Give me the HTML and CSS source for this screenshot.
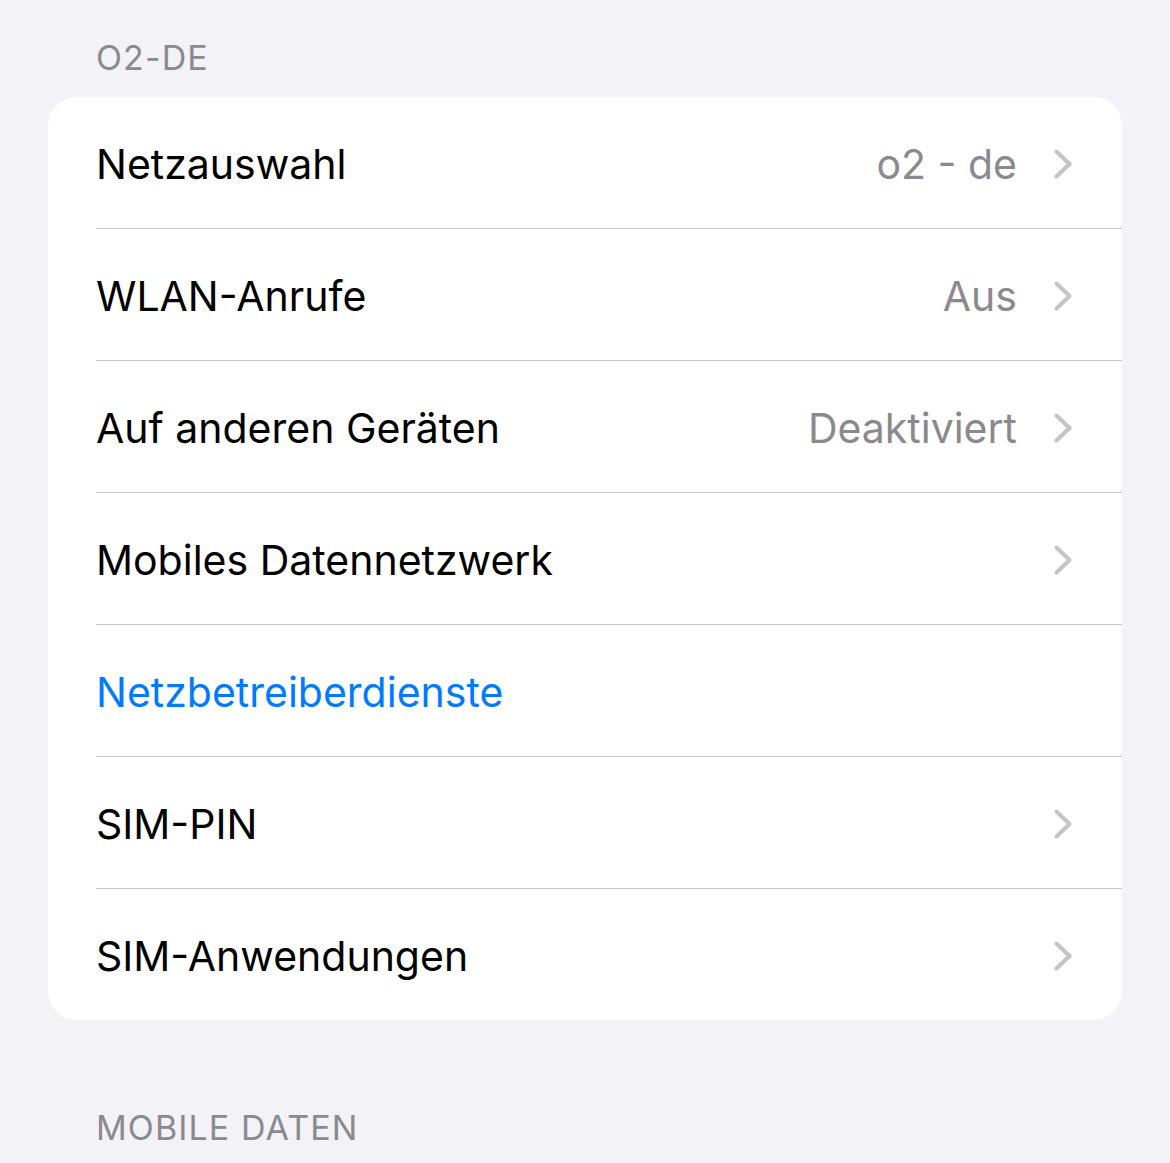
FILE: index.html
```html
<!DOCTYPE html>
<html lang="de">
<head>
    <meta charset="UTF-8">
    <meta name="viewport" content="width=device-width, initial-scale=1.0">
    <title>Mobilfunk</title>
    <link rel="stylesheet" href="styles.css">
</head>
<body>

    <div class="section-title">O2-DE</div>

    <div class="group">
        <div class="row">
            <span class="label">Netzauswahl</span>
            <span class="value">o2 - de</span>
            <svg class="chevron" viewBox="0 0 18 30"><path d="M2.5 2.5 L15.5 15 L2.5 27.5"/></svg>
        </div>
        <div class="row">
            <span class="label">WLAN-Anrufe</span>
            <span class="value">Aus</span>
            <svg class="chevron" viewBox="0 0 18 30"><path d="M2.5 2.5 L15.5 15 L2.5 27.5"/></svg>
        </div>
        <div class="row">
            <span class="label">Auf anderen Geräten</span>
            <span class="value">Deaktiviert</span>
            <svg class="chevron" viewBox="0 0 18 30"><path d="M2.5 2.5 L15.5 15 L2.5 27.5"/></svg>
        </div>
        <div class="row">
            <span class="label">Mobiles Datennetzwerk</span>
            <svg class="chevron" viewBox="0 0 18 30"><path d="M2.5 2.5 L15.5 15 L2.5 27.5"/></svg>
        </div>
        <div class="row">
            <span class="label link">Netzbetreiberdienste</span>
        </div>
        <div class="row">
            <span class="label">SIM-PIN</span>
            <svg class="chevron" viewBox="0 0 18 30"><path d="M2.5 2.5 L15.5 15 L2.5 27.5"/></svg>
        </div>
        <div class="row">
            <span class="label">SIM-Anwendungen</span>
            <svg class="chevron" viewBox="0 0 18 30"><path d="M2.5 2.5 L15.5 15 L2.5 27.5"/></svg>
        </div>
    </div>

    <div class="section-title lower">MOBILE DATEN</div>

</body>
</html>
```

FILE: styles.css
```css
/* Page */
body {
    margin: 0;
    padding: 0 48px;
    background: #f2f2f7;
    font-family: Inter, "Noto Sans", sans-serif;
    color: #000;
    height: 1163px;
    overflow: hidden;
}

/* Section headers */
.section-title {
    padding: 38px 0 0 48px;
    height: 97px;
    box-sizing: border-box;
    font-size: 34px;
    line-height: 40px;
    letter-spacing: 1.1px;
    color: #8a8a8e;
}

.section-title.lower {
    padding-top: 88px;
    height: auto;
}

/* Grouped list */
.group {
    background: #fff;
    border-radius: 28px;
    overflow: hidden;
}

.row {
    position: relative;
    display: flex;
    align-items: center;
    height: 132px;
    padding: 2px 50px 0 48px;
    box-sizing: border-box;
}

.row:last-child {
    height: 131px;
}

.row::after {
    content: "";
    position: absolute;
    left: 48px;
    right: 0;
    bottom: 0;
    height: 1px;
    background: #c6c6c8;
}

.row:last-child::after {
    display: none;
}

.label {
    flex: 1;
    font-size: 41px;
}

.label.link {
    color: #007aff;
}

.value {
    font-size: 41px;
    color: #8a8a8e;
    margin-right: 37px;
}

.chevron {
    width: 18px;
    height: 30px;
    fill: none;
    stroke: #c4c4c7;
    stroke-width: 4;
    stroke-linecap: round;
    stroke-linejoin: round;
}
```
